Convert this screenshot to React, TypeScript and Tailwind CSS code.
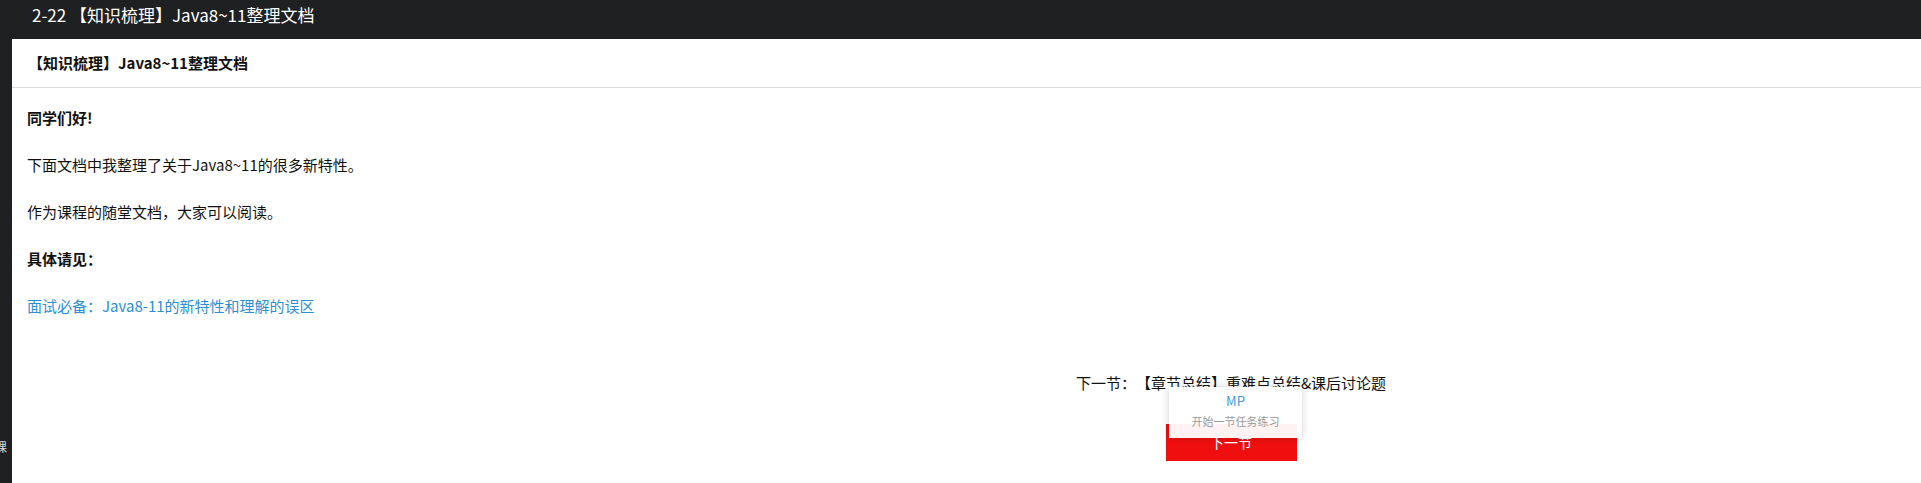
import React from 'react';

/**
 * Chapter document page: dark title bar, white content panel with a
 * document header, a few paragraphs and a "next section" block.
 */
const paragraphs: { text: string; bold?: boolean; link?: boolean }[] = [
  { text: '同学们好!', bold: true },
  { text: '下面文档中我整理了关于Java8~11的很多新特性。' },
  { text: '作为课程的随堂文档，大家可以阅读。' },
  { text: '具体请见：', bold: true },
  { text: '面试必备：Java8-11的新特性和理解的误区', link: true },
];

const NextSection: React.FC = () => {
  return (
    <div className="relative mt-[55px] ml-[1049px] w-[340px] flex flex-col items-center">
      <p className="text-[15px] leading-[22px] text-[#111]">
        下一节：【章节总结】重难点总结&amp;课后讨论题
      </p>
      <button className="mt-[30px] w-[131px] h-[37px] bg-[#f00f0f] text-white text-[14px] flex items-center justify-center">
        下一节
      </button>

      {/* hover popup sitting over the button */}
      <div className="absolute left-[108px] top-[15px] w-[133px] h-[51px] bg-white/95 shadow-[0_0_8px_rgba(0,0,0,0.18)] flex flex-col items-center pt-[5px]">
        <span className="text-[13px] leading-[18px] text-[#3a9de0]">MP</span>
        <span className="mt-[3px] text-[11px] leading-[16px] text-[#9a9a9a]">开始一节任务练习</span>
      </div>
    </div>
  );
};

const App: React.FC = () => {
  return (
    <div className="w-full h-[483px] bg-[#1f2022] flex flex-col overflow-hidden [text-spacing-trim:space-all] font-['Noto_Sans_CJK_SC','Noto_Sans',sans-serif]">
      <div className="h-[39px] shrink-0 pl-[32px]">
        <h1 className="text-[17px] leading-[30px] text-white font-normal">2-22 【知识梳理】Java8~11整理文档</h1>
      </div>

      <div className="flex flex-row flex-1 min-h-0">
        <div className="w-[12px] shrink-0 overflow-hidden flex flex-col justify-end pb-[29px]">
          <span className="-ml-[5px] text-[12px] leading-[14px] text-[#d8d8d8] whitespace-nowrap">课</span>
        </div>

        <div className="flex-1 bg-white flex flex-col">
          <div className="h-[49px] shrink-0 border-b border-[#d9d9d9] flex items-center pl-[16px]">
            <h2 className="text-[15px] font-bold text-[#111]">【知识梳理】Java8~11整理文档</h2>
          </div>

          <div className="px-[15px] pt-[19px] flex flex-col gap-[25px]">
            {paragraphs.map((p, i) => (
              <p
                key={i}
                className={
                  p.link
                    ? 'text-[15px] leading-[22px] text-[#2b8fd6]'
                    : p.bold
                    ? 'text-[15px] leading-[22px] font-bold text-[#111]'
                    : 'text-[15px] leading-[22px] text-[#111]'
                }
              >
                {p.text}
              </p>
            ))}
          </div>

          <NextSection />
        </div>
      </div>
    </div>
  );
};

export default App;
